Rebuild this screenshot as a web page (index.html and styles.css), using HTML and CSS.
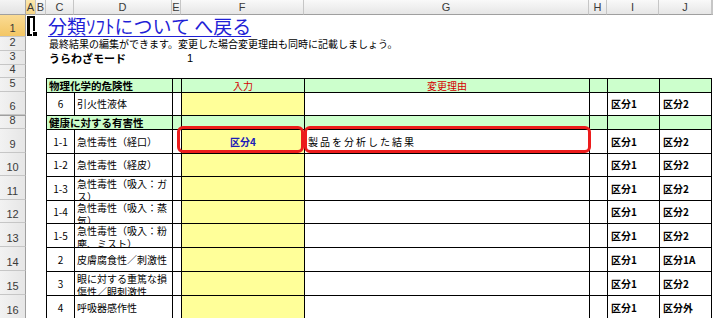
FILE: index.html
```html
<!DOCTYPE html>
<html lang="ja">
<head>
<meta charset="utf-8">
<title>分類ソフト</title>
<link rel="stylesheet" href="styles.css">
</head>
<body>
<div class="sheet">
  <div class="ch corner"></div>
  <div class="ch sel">A</div>
  <div class="ch">B</div>
  <div class="ch">C</div>
  <div class="ch">D</div>
  <div class="ch">E</div>
  <div class="ch">F</div>
  <div class="ch">G</div>
  <div class="ch">H</div>
  <div class="ch">I</div>
  <div class="ch">J</div>
  <div class="ch rest"></div>

  <div class="rh sel">1</div>
  <div class="cell a1"><div class="cursor"></div><div class="handle"></div></div>
  <div class="cell"></div>
  <div class="cell span9 title"><a href="#">分類ｿﾌﾄについて へ戻る</a></div>

  <div class="rh">2</div>
  <div class="cell"></div>
  <div class="cell"></div>
  <div class="cell span9 note">最終結果の編集ができます。変更した場合変更理由も同時に記載しましょう。</div>

  <div class="rh">3</div>
  <div class="cell"></div>
  <div class="cell"></div>
  <div class="cell span3 mode">うらわざモード</div>
  <div class="cell modeval">1</div>
  <div class="cell span5"></div>

  <div class="rh">4</div>
  <div class="cell span11"></div>

  <div class="rh">5</div>
  <div class="cell"></div>
  <div class="cell"></div>
  <div class="t grn sec span2">物理化学的危険性</div>
  <div class="t grn"></div>
  <div class="t grn red center">入力</div>
  <div class="t grn red center">変更理由</div>
  <div class="t grn"></div>
  <div class="t grn"></div>
  <div class="t grn last"></div>
  <div class="cell"></div>

  <div class="rh">6</div>
  <div class="cell"></div>
  <div class="cell"></div>
  <div class="t num">6</div>
  <div class="t name">引火性液体</div>
  <div class="t"></div>
  <div class="t yel"></div>
  <div class="t"></div>
  <div class="t"></div>
  <div class="t cls">区分1</div>
  <div class="t cls last">区分2</div>
  <div class="cell"></div>

  <div class="rh hid">8</div>
  <div class="cell"></div>
  <div class="cell"></div>
  <div class="t grn sec span2">健康に対する有害性</div>
  <div class="t grn"></div>
  <div class="t grn"></div>
  <div class="t grn"></div>
  <div class="t grn"></div>
  <div class="t grn"></div>
  <div class="t grn last"></div>
  <div class="cell"></div>

  <div class="rh">9</div>
  <div class="cell"></div>
  <div class="cell"></div>
  <div class="t num">1-1</div>
  <div class="t name">急性毒性（経口）</div>
  <div class="t"></div>
  <div class="t yel center input">区分4</div>
  <div class="t reason">製品を分析した結果</div>
  <div class="t"></div>
  <div class="t cls">区分1</div>
  <div class="t cls last">区分2</div>
  <div class="cell"></div>

  <div class="rh">10</div>
  <div class="cell"></div>
  <div class="cell"></div>
  <div class="t num">1-2</div>
  <div class="t name">急性毒性（経皮）</div>
  <div class="t"></div>
  <div class="t yel"></div>
  <div class="t"></div>
  <div class="t"></div>
  <div class="t cls">区分1</div>
  <div class="t cls last">区分2</div>
  <div class="cell"></div>

  <div class="rh">11</div>
  <div class="cell"></div>
  <div class="cell"></div>
  <div class="t num">1-3</div>
  <div class="t name wrap">急性毒性（吸入：ガス）</div>
  <div class="t"></div>
  <div class="t yel"></div>
  <div class="t"></div>
  <div class="t"></div>
  <div class="t cls">区分1</div>
  <div class="t cls last">区分2</div>
  <div class="cell"></div>

  <div class="rh">12</div>
  <div class="cell"></div>
  <div class="cell"></div>
  <div class="t num">1-4</div>
  <div class="t name wrap">急性毒性（吸入：蒸気）</div>
  <div class="t"></div>
  <div class="t yel"></div>
  <div class="t"></div>
  <div class="t"></div>
  <div class="t cls">区分1</div>
  <div class="t cls last">区分2</div>
  <div class="cell"></div>

  <div class="rh">13</div>
  <div class="cell"></div>
  <div class="cell"></div>
  <div class="t num">1-5</div>
  <div class="t name wrap">急性毒性（吸入：粉塵、ミスト）</div>
  <div class="t"></div>
  <div class="t yel"></div>
  <div class="t"></div>
  <div class="t"></div>
  <div class="t cls">区分1</div>
  <div class="t cls last">区分2</div>
  <div class="cell"></div>

  <div class="rh">14</div>
  <div class="cell"></div>
  <div class="cell"></div>
  <div class="t num">2</div>
  <div class="t name">皮膚腐食性／刺激性</div>
  <div class="t"></div>
  <div class="t yel"></div>
  <div class="t"></div>
  <div class="t"></div>
  <div class="t cls">区分1</div>
  <div class="t cls last">区分1A</div>
  <div class="cell"></div>

  <div class="rh">15</div>
  <div class="cell"></div>
  <div class="cell"></div>
  <div class="t num">3</div>
  <div class="t name wrap">眼に対する重篤な損傷性／眼刺激性</div>
  <div class="t"></div>
  <div class="t yel"></div>
  <div class="t"></div>
  <div class="t"></div>
  <div class="t cls">区分1</div>
  <div class="t cls last">区分2</div>
  <div class="cell"></div>

  <div class="rh">16</div>
  <div class="cell"></div>
  <div class="cell"></div>
  <div class="t num">4</div>
  <div class="t name">呼吸器感作性</div>
  <div class="t"></div>
  <div class="t yel"></div>
  <div class="t"></div>
  <div class="t"></div>
  <div class="t cls">区分1</div>
  <div class="t cls last">区分外</div>
  <div class="cell"></div>

  <div class="mark mark-input"></div>
  <div class="mark mark-reason"></div>
</div>
</body>
</html>
```

FILE: styles.css
```css
* { box-sizing: border-box; margin: 0; padding: 0; }

body {
  margin: 0;
  background: #fff;
  color: #000;
  font-family: "Noto Sans CJK JP", "Noto Sans", sans-serif;
  overflow: hidden;
}

.sheet {
  position: relative;
  display: grid;
  grid-template-columns: 26px 10px 10px 28px 98px 9px 123px 285px 18px 52px 53px 1fr;
  grid-template-rows: 15px 22px 14px 14px 13px 14px 23px 14px 24px 23px 24px 23px 24px 24px 24px 24px;
  width: 713px;
  height: 318px;
  overflow: hidden;
}

/* column headers */
.ch {
  background: linear-gradient(#f9f9f9, #e6e6e6);
  border-right: 1px solid #c6c6c6;
  border-bottom: 1px solid #9f9f9f;
  font: 11px/14px "Liberation Sans", sans-serif;
  color: #3a3a3a;
  text-align: center;
}
.ch.sel { background: linear-gradient(#fbe7ad, #f6d584); }
.ch.corner { background: linear-gradient(#f4f4f4, #e2e2e2); border-right-color: #a8a8a8; }

/* row headers */
.rh {
  background: linear-gradient(90deg, #f2f2f2, #e6e6e6);
  border-right: 1px solid #9f9f9f;
  border-bottom: 1px solid #c6c6c6;
  font: 11px/12px "Liberation Sans", sans-serif;
  color: #3a3a3a;
  display: flex;
  align-items: flex-end;
  justify-content: center;
  padding-bottom: 2px;
}
.rh.sel { background: linear-gradient(#fadb94, #f3c664); }
.rh.hid { border-top: 1px solid #9f9f9f; }

.cell { position: relative; min-width: 0; }
.span2 { grid-column: span 2; }
.span3 { grid-column: span 3; }
.span5 { grid-column: span 5; }
.span9 { grid-column: span 9; }
.span11 { grid-column: span 11; }

/* A1 selection */
.cursor {
  position: absolute;
  left: 1px; top: 1px;
  width: 8px; height: 20px;
  border: 2px solid #000;
  border-left-width: 3px;
}
.handle {
  position: absolute;
  left: 6px; top: 16px;
  width: 6px; height: 6px;
  background: #000;
  border: 1px solid #fff;
}

.title {
  padding-left: 2px;
  font-size: 19px;
  line-height: 22px;
  white-space: nowrap;
}
.title a { color: #1f1fd6; text-decoration: underline; text-underline-offset: 2px; }

.note {
  padding-left: 3px;
  font-size: 10px;
  line-height: 14px;
  white-space: nowrap;
}
.mode {
  padding-left: 3px;
  font-size: 11px;
  font-weight: bold;
  line-height: 14px;
  white-space: nowrap;
}
.modeval {
  padding-left: 6px;
  font: 11px/14px "Liberation Sans", sans-serif;
}

/* table cells */
.t {
  border-left: 1px solid #000;
  border-top: 1px solid #000;
  display: flex;
  align-items: center;
  font-size: 10px;
  line-height: 12px;
  white-space: nowrap;
  overflow: hidden;
  min-width: 0;
}
.t.last { border-right: 1px solid #000; }
.grn { background: #ccffcc; }
.yel { background: #ffff99; }
.center { justify-content: center; }
.sec { font-weight: bold; padding-left: 2px; font-size: 10.5px; }
.red { color: #d40000; }
.num { justify-content: center; }
.name { padding-left: 2px; }
.name.wrap {
  white-space: normal;
  align-items: flex-start;
  line-height: 12.5px;
  padding-top: 1px;
}
.cls { padding-left: 3px; font-weight: bold; }
.input { color: #1c1cb8; font-weight: bold; }
.reason { padding-left: 3px; letter-spacing: 2px; }

/* red annotation frames drawn over the sheet */
.mark {
  position: absolute;
  border: 3px solid #ec1c1c;
  border-radius: 6px;
}
.mark-input { left: 177px; top: 126px; width: 127px; height: 27px; }
.mark-reason { left: 304px; top: 126px; width: 287px; height: 27px; }
```
